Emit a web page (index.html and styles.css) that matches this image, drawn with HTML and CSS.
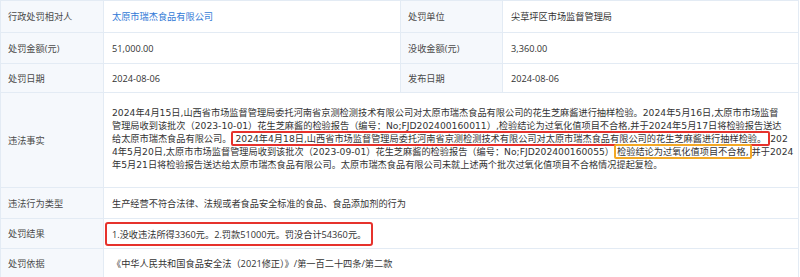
FILE: index.html
```html
<!DOCTYPE html>
<html lang="zh-CN">
<head>
<meta charset="utf-8">
<title>行政处罚</title>
<link rel="stylesheet" href="styles.css">
</head>
<body>
<table class="info">
  <colgroup>
    <col class="c-label"><col class="c-value"><col class="c-label2"><col class="c-value2">
  </colgroup>
  <tr class="r1">
    <td class="label">行政处罚相对人</td>
    <td class="value"><span class="link">太原市瑞杰食品有限公司</span></td>
    <td class="label">处罚单位</td>
    <td class="value">尖草坪区市场监督管理局</td>
  </tr>
  <tr class="r2">
    <td class="label">处罚金额(元)</td>
    <td class="value">51,000.00</td>
    <td class="label">没收金额(元)</td>
    <td class="value">3,360.00</td>
  </tr>
  <tr class="r3">
    <td class="label">处罚日期</td>
    <td class="value">2024-08-06</td>
    <td class="label">发布日期</td>
    <td class="value">2024-08-06</td>
  </tr>
  <tr class="r4">
    <td class="label">违法事实</td>
    <td class="value para" colspan="3">2024年4月15日,山西省市场监督管理局委托河南省京测检测技术有限公司对太原市瑞杰食品有限公司的花生芝麻酱进行抽样检验。2024年5月16日,太原市市场监督<br>管理局收到该批次（2023-10-01）花生芝麻酱的检验报告（编号：No;FJD202400160011）,检验结论为过氧化值项目不合格,并于2024年5月17日将检验报告送达<br>给太原市瑞杰食品有限公司。<span class="mark-red">2024年4月18日,山西省市场监督管理局委托河南省京测检测技术有限公司对太原市瑞杰食品有限公司的花生芝麻酱进行抽样检验。</span>202<br>4年5月20日,太原市市场监督管理局收到该批次（2023-09-01）花生芝麻酱的检验报告（编号：No;FJD202400160055）<span class="mark-orange">检验结论为过氧化值项目不合格,</span>并于2024<br>年5月21日将检验报告送达给太原市瑞杰食品有限公司。太原市瑞杰食品有限公司未就上述两个批次过氧化值项目不合格情况提起复检。</td>
  </tr>
  <tr class="r5">
    <td class="label">违法行为类型</td>
    <td class="value" colspan="3">生产经营不符合法律、法规或者食品安全标准的食品、食品添加剂的行为</td>
  </tr>
  <tr class="r6">
    <td class="label">处罚结果</td>
    <td class="value result" colspan="3"><span class="mark-box">1.没收违法所得3360元。2.罚款51000元。罚没合计54360元。</span></td>
  </tr>
  <tr class="r7">
    <td class="label">处罚依据</td>
    <td class="value" colspan="3">《中华人民共和国食品安全法（2021修正）》/第一百二十四条/第二款</td>
  </tr>
</table>
</body>
</html>
```
FILE: styles.css
```css
html, body {
  margin: 0;
  padding: 0;
  background: #ffffff;
}

body {
  font-family: "Open Sans", "Noto Sans CJK SC", sans-serif;
  font-size: 9.2px;
  line-height: 13px;
  color: #333333;
}

.info {
  border-collapse: collapse;
  table-layout: fixed;
  width: 798px;
}

.c-label { width: 103px; }
.c-value { width: 297px; }
.c-label2 { width: 102px; }
.c-value2 { width: 296px; }

.info td {
  border: 1px solid #e3ebf4;
  padding: 0 8px;
  vertical-align: middle;
  white-space: nowrap;
  overflow: visible;
}

.info td.label {
  background: #f5f8fc;
  color: #4a4a4a;
  padding-left: 7px;
}

.r1 td { height: 31px; }
.r2 td { height: 30px; }
.r3 td { height: 28px; }
.r4 td { height: 90px; }
.r5 td { height: 30px; }
.r6 td { height: 29px; }
.r7 td { height: 29px; }

.info td.para {
  font-family: "DejaVu Sans", "Noto Sans CJK SC", sans-serif;
  padding-bottom: 4px;
}

.link {
  color: #3179d6;
}

.mark-red {
  border: 2px solid #e6322c;
  border-radius: 2px;
  padding: 0 2px;
}

.mark-orange {
  border: 2px solid #f3a825;
  border-radius: 2px;
  padding: 0 1px;
}

.info td.result {
  padding-left: 1px;
}

.mark-box {
  display: inline-block;
  border: 2px solid #e6322c;
  border-radius: 3px;
  padding: 4px 5px 3px 5px;
}
```
